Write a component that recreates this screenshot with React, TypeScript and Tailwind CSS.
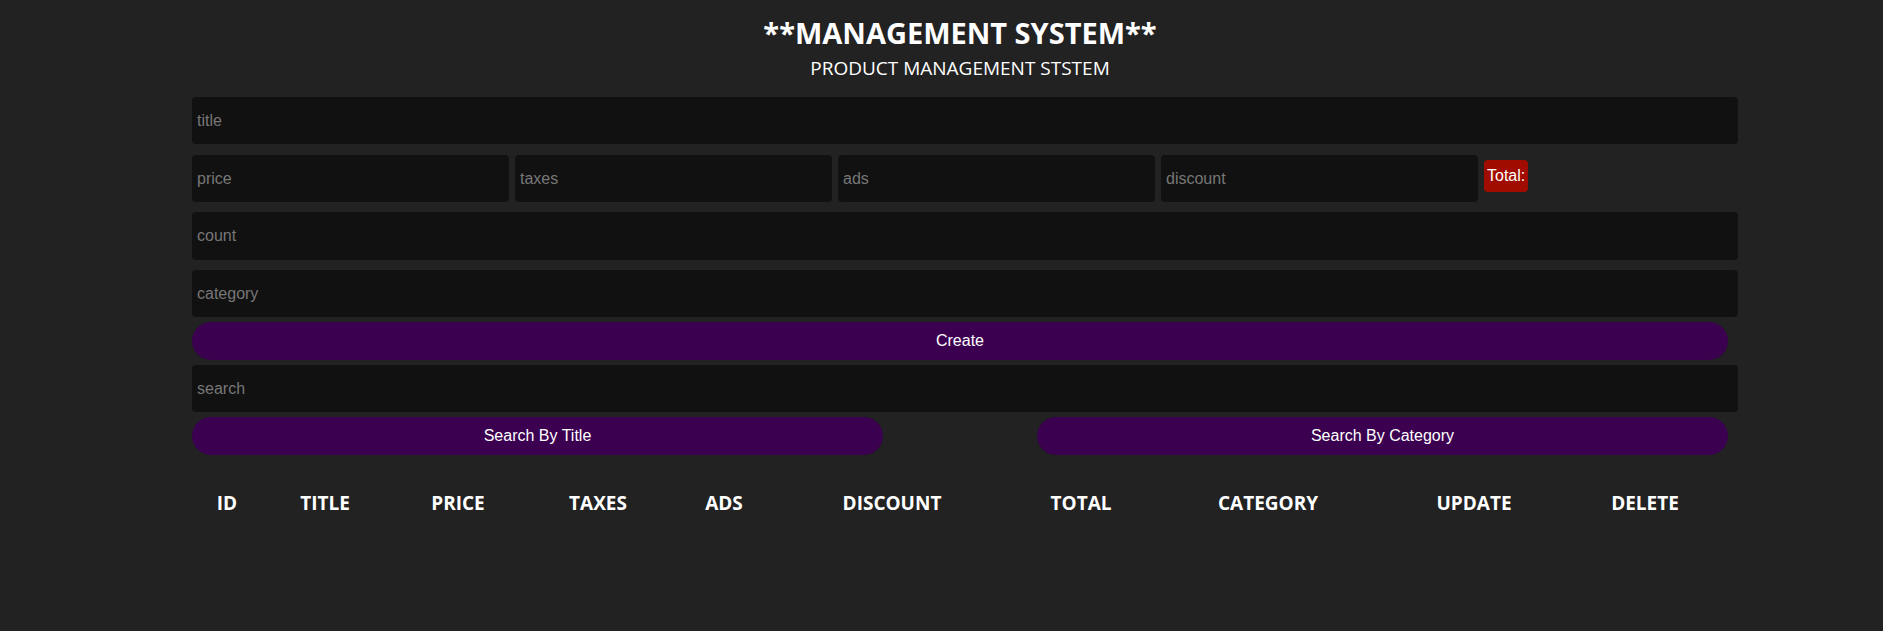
const fields = ["price", "taxes", "ads", "discount"];

const columns = [
    { label: "ID", w: "w-[70px]" },
    { label: "TITLE", w: "w-[126px]" },
    { label: "PRICE", w: "w-[140px]" },
    { label: "TAXES", w: "w-[140px]" },
    { label: "ADS", w: "w-[112px]" },
    { label: "DISCOUNT", w: "w-[224px]" },
    { label: "TOTAL", w: "w-[154px]" },
    { label: "CATEGORY", w: "w-[220px]" },
    { label: "UPDATE", w: "w-[192px]" },
    { label: "DELETE", w: "w-[150px]" }
];

const inputClass =
    "h-[47px] rounded-[4px] bg-[#111111] px-[5px] text-[16px] text-white placeholder:text-[#777777] outline-none font-['Liberation_Sans',Arial,sans-serif]";

const buttonClass =
    "h-[38px] rounded-full bg-[#3b0050] text-[16px] text-white font-['Liberation_Sans',Arial,sans-serif]";

export default function App() {
    return (
        <div className="min-h-[631px] w-full bg-[#222222] text-white">
            <div className="pl-[37px] pt-[15px] text-center font-['Open_Sans',sans-serif]">
                <h2 className="text-[29px] font-bold leading-[36px]">
                    **MANAGEMENT SYSTEM**
                </h2>
                <p className="mt-[5px] text-[19px] leading-[25px]">
                    PRODUCT MANAGEMENT STSTEM
                </p>
            </div>

            <div className="ml-[192px] mt-[16px] flex w-[1546px] flex-col">
                <input placeholder="title" className={`${inputClass} w-full`} />

                <div className="mt-[11px] flex items-start gap-[6px]">
                    {fields.map((f) => (
                        <input
                            key={f}
                            placeholder={f}
                            className={`${inputClass} w-[317px]`}
                        />
                    ))}
                    <span className="mt-[5px] flex h-[32px] items-center rounded-[4px] bg-[#a00d00] px-[3px] text-[16px] font-['Liberation_Sans',Arial,sans-serif]">
                        Total:
                    </span>
                </div>

                <input
                    placeholder="count"
                    className={`${inputClass} mt-[10px] h-[48px] w-full`}
                />
                <input
                    placeholder="category"
                    className={`${inputClass} mt-[10px] w-full`}
                />

                <button className={`${buttonClass} mt-[5px] w-[1536px]`}>
                    Create
                </button>

                <input
                    placeholder="search"
                    className={`${inputClass} mt-[5px] w-full`}
                />

                <div className="mt-[5px] flex w-[1536px] justify-between">
                    <button className={`${buttonClass} w-[691px]`}>
                        Search By Title
                    </button>
                    <button className={`${buttonClass} w-[691px]`}>
                        Search By Category
                    </button>
                </div>

                <div className="mt-[34px] flex font-['Open_Sans',sans-serif] text-[19px] font-bold leading-[28px]">
                    {columns.map((c) => (
                        <div key={c.label} className={`${c.w} text-center`}>
                            {c.label}
                        </div>
                    ))}
                </div>
            </div>
        </div>
    );
}
